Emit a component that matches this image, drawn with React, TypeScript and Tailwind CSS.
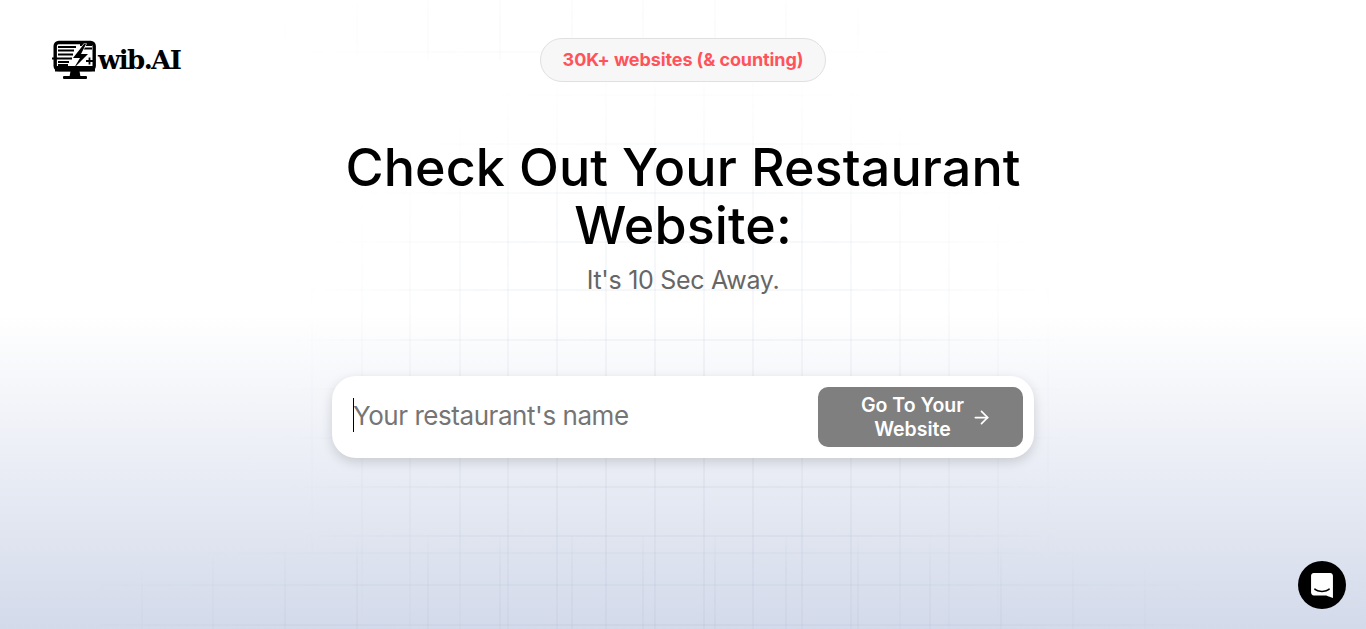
import React from 'react';
import { ArrowRight } from 'lucide-react';

const sans = "font-['Inter',sans-serif]";

// wide grid (top strip + bottom strip) and the narrow one behind the hero
const wideX = [142, 213, 285, 357, 428, 500, 572, 643, 715, 786, 858, 930, 1001, 1073, 1145];
const wideY = [553, 585, 625];
const narrowX = [312, 362, 410, 460, 508, 557, 606, 655, 704, 753, 802, 851, 900, 949, 998, 1048];
const narrowY = [95, 144, 193, 242, 290, 340, 389, 438, 487, 536];

const GridLines = () => (
  <svg className="absolute inset-0 h-full w-full" viewBox="0 0 1366 629" preserveAspectRatio="none" aria-hidden="true">
    <defs>
      <radialGradient id="fade">
        <stop offset="0%" stopColor="#fff" />
        <stop offset="60%" stopColor="#fff" stopOpacity="0.75" />
        <stop offset="100%" stopColor="#fff" stopOpacity="0" />
      </radialGradient>
      <mask id="mid" maskUnits="userSpaceOnUse" x="0" y="0" width="1366" height="629">
        <ellipse cx="680" cy="420" rx="400" ry="370" fill="url(#fade)" />
      </mask>
      <mask id="low" maskUnits="userSpaceOnUse" x="0" y="0" width="1366" height="629">
        <ellipse cx="640" cy="610" rx="600" ry="85" fill="url(#fade)" />
      </mask>
      <mask id="top" maskUnits="userSpaceOnUse" x="0" y="0" width="1366" height="629">
        <ellipse cx="600" cy="30" rx="330" ry="50" fill="url(#fade)" />
      </mask>
    </defs>
    <g mask="url(#mid)" stroke="#8088a8" strokeOpacity="0.1" strokeWidth="1.5">
      {narrowX.map((x) => <line key={x} x1={x} y1="60" x2={x} y2="629" />)}
      {narrowY.map((y) => <line key={y} x1="280" y1={y} x2="1080" y2={y} />)}
    </g>
    <g mask="url(#low)" stroke="#8088a8" strokeOpacity="0.08" strokeWidth="1.5">
      {wideX.map((x) => <line key={x} x1={x} y1="536" x2={x} y2="629" />)}
      {wideY.map((y) => <line key={y} x1="100" y1={y} x2="1200" y2={y} />)}
    </g>
    <g mask="url(#top)" stroke="#8088a8" strokeOpacity="0.05" strokeWidth="1.5">
      {wideX.map((x) => <line key={x} x1={x} y1="0" x2={x} y2="60" />)}
      <line x1="280" y1="52" x2="930" y2="52" />
    </g>
  </svg>
);

const Logo = () => (
  <div className="ml-[52px] flex items-center">
    <svg width="46" height="40" viewBox="0 0 46 40" aria-hidden="true">
      <rect x="3.2" y="2.5" width="39" height="27" rx="3.5" fill="#fff" stroke="#000" strokeWidth="3.4" />
      <path d="M0 18.5h20M6 7h18M6 10.5h16M6 14.5h15M6 22h11M6 25h10" stroke="#000" strokeWidth="2" />
      <path d="M28 5h12M29 8.5h11" stroke="#000" strokeWidth="1.8" />
      <path d="M32 4 21 18h7l-6 10 14-14h-7l5-10z" fill="#000" stroke="#fff" strokeWidth="1.2" paintOrder="stroke" />
      <path d="M37.5 17.5v7M34 21h7" stroke="#000" strokeWidth="1.8" />
      <path d="M3 26h40v5.5H3z" fill="#000" />
      <path d="M18.5 31h9l1 6h-11z" fill="#000" />
      <rect x="11" y="36" width="24" height="3" rx="1" fill="#000" />
    </svg>
    <span className="font-['DejaVu_Serif',serif] text-[26px] font-bold leading-none tracking-[-1.6px] text-black">wib.AI</span>
  </div>
);

export default function App() {
  return (
    <div className={`relative h-[629px] overflow-hidden bg-gradient-to-b from-white from-50% to-[#d3daea] ${sans}`}>
      <GridLines />

      <div className="relative flex flex-col items-center">
        <header className="grid w-full grid-cols-[1fr_auto_1fr] items-center pt-[38px]">
          <Logo />
          <div className="flex h-[44px] w-[286px] items-center justify-center rounded-full border border-[#e0e0e0] bg-[#f7f7f7] pb-[2px] text-[18px] font-bold tracking-[-0.1px] text-[#ff535c]">
            30K+ websites (&amp; counting)
          </div>
          <div />
        </header>

        <h1 className="mt-[57px] w-[760px] text-center text-[52px] font-medium leading-[58px] tracking-[0.1px] text-black">
          Check Out Your Restaurant Website:
        </h1>
        <p className="mt-[9px] text-[25px] leading-[32px] tracking-[-0.3px] text-[#666]">It's 10 Sec Away.</p>

        <div className="relative mt-[80px] flex h-[82px] w-[702px] items-center rounded-[24px] bg-white pl-[21px] pr-[11px] shadow-[0_4px_12px_rgba(0,0,0,0.15)]">
          <input
            className="min-w-0 flex-1 bg-transparent pb-[3px] text-[26px] tracking-[-0.45px] outline-none placeholder:text-[#757575]"
            placeholder="Your restaurant's name"
          />
          <span className="absolute left-[21px] top-[22px] h-[34px] w-px bg-black" />
          <button className="flex h-[60px] w-[205px] items-center gap-[6px] rounded-[10px] bg-[#7f7f7f] pl-[42px] text-white">
            <span className="w-[105px] text-center text-[19.5px] font-semibold leading-[24px]">Go To Your Website</span>
            <ArrowRight size={21} strokeWidth={2} />
          </button>
        </div>
      </div>

      <button className="absolute bottom-[20px] right-[20px] flex h-[48px] w-[48px] items-center justify-center rounded-full bg-black">
        <svg width="22" height="25" viewBox="0 0 28 32" fill="#fff" aria-hidden="true">
          <path d="M28 32s-4.714-1.855-8.527-3.34H3.437C1.54 28.66 0 27.026 0 25.013V3.644C0 1.633 1.54 0 3.437 0h21.125c1.898 0 3.437 1.632 3.437 3.645v18.404H28V32zm-4.139-11.982a.88.88 0 00-1.292-.105c-.03.026-3.015 2.681-8.57 2.681-5.486 0-8.517-2.636-8.571-2.684a.88.88 0 00-1.29.107 1.01 1.01 0 00-.219.708.992.992 0 00.318.664c.142.128 3.537 3.15 9.762 3.15 6.226 0 9.621-3.022 9.763-3.15a.992.992 0 00.317-.664 1.01 1.01 0 00-.218-.707z" />
        </svg>
      </button>
    </div>
  );
}
